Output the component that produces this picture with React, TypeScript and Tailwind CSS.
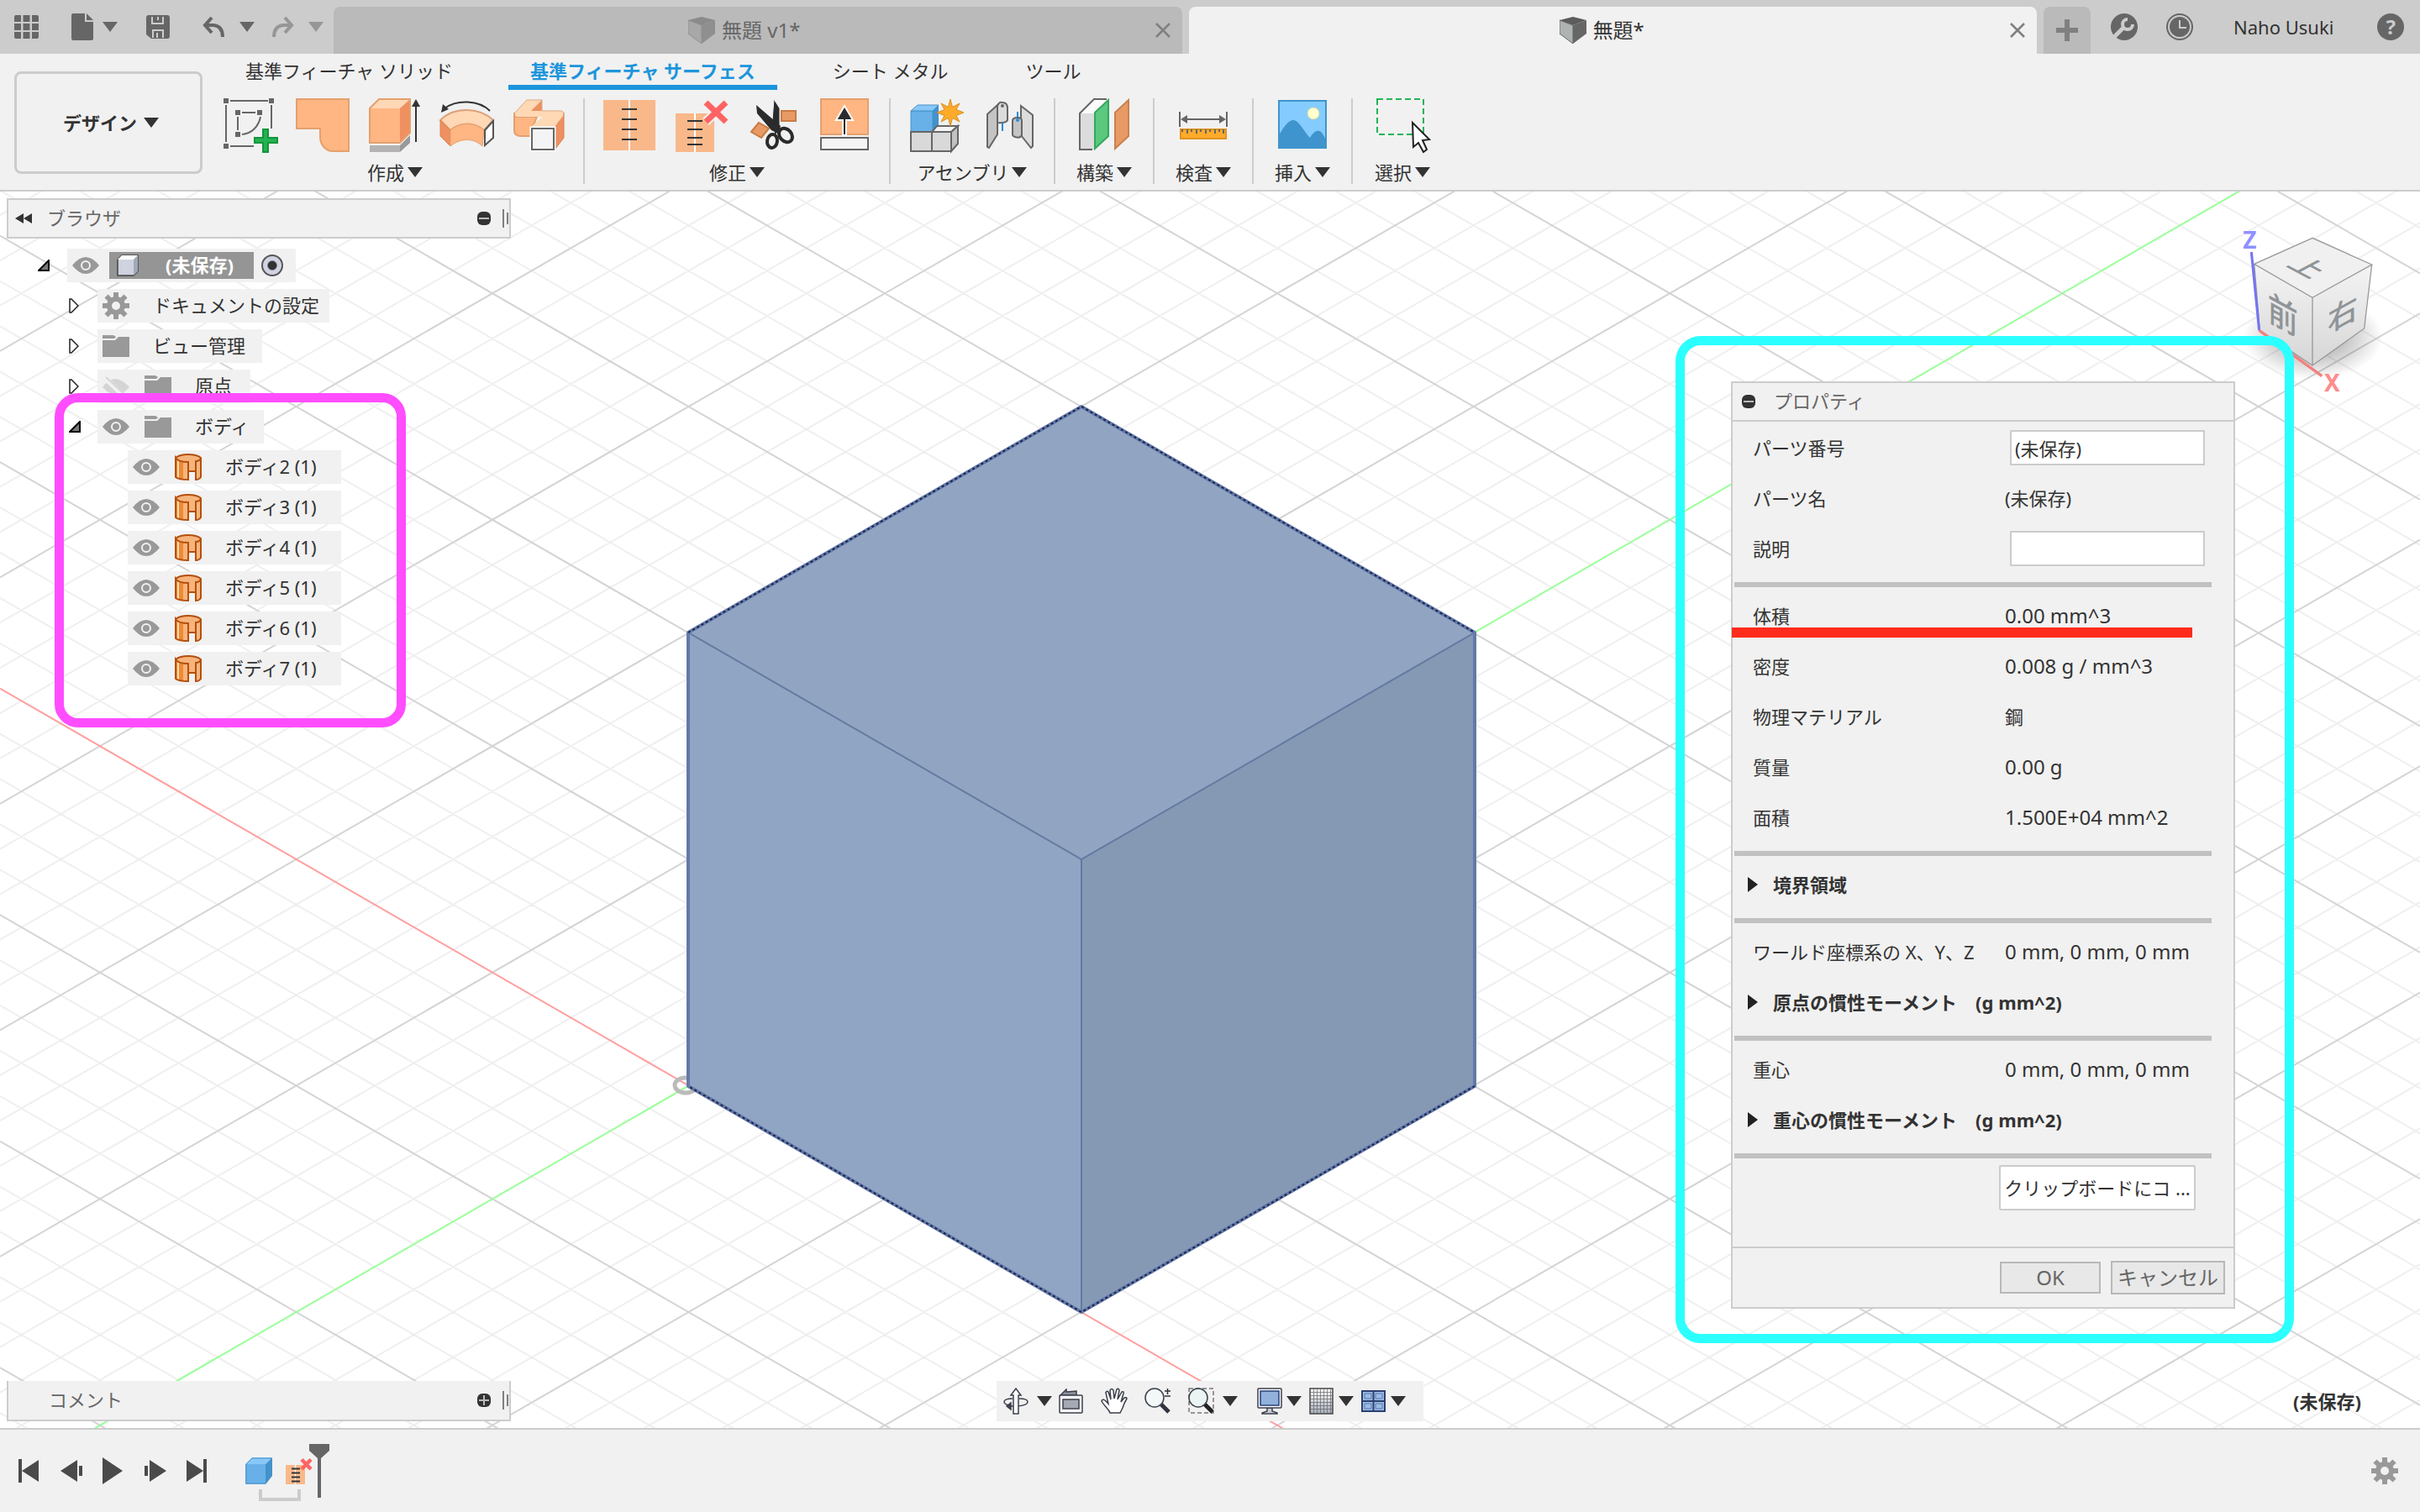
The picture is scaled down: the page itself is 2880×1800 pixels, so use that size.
import React, { useState } from 'react';

const ORIGIN = { x: 819.5, y: 1292.5 };
const SLOPE = 0.577;
const STEP = 53.9;

// Isometric floor grid, every fifth line is a major one
const gridLines = (major: boolean) => {
  let d = '';
  for (let k = -60; k <= 60; k++) {
    if (k === 0 || (k % 5 === 0) !== major) continue;
    const y = ORIGIN.y + k * STEP;
    const leftDown = y - ORIGIN.x * SLOPE;
    const leftUp = y + ORIGIN.x * SLOPE;
    d += `M0 ${leftDown}L2880 ${leftDown + 2880 * SLOPE}`;
    d += `M0 ${leftUp}L2880 ${leftUp - 2880 * SLOPE}`;
  }
  return d;
};

const Caret: React.FC<{ className?: string }> = ({ className = 'text-[#333]' }) => (
  <svg width="18" height="12" viewBox="0 0 18 12" className={`shrink-0 ${className}`}>
    <path d="M0 0H18L9 12Z" fill="currentColor" />
  </svg>
);

const Icon: React.FC<{ children: React.ReactNode }> = ({ children }) => (
  <svg width="64" height="64" viewBox="0 0 64 64" fill="none" className="overflow-visible">{children}</svg>
);

const SketchIcon = () => (
  <Icon>
    <g fill="#666">
      <path d="M0 0h6v6H0zM54 0h6v6h-6zM0 54h6v6H0zM14 14h6v6h-6zM40 14h6v6h-6zM14 40h6v6h-6z" />
    </g>
    <path d="M8 3H53M3 8V52M57 8V36M8 57H36M22 17H38M17 22V38M44 22C42 33 34 42 22 43" stroke="#666" strokeWidth="2" />
    <path d="M47 37h6v10h11v6H53v11h-6V53H37v-6h10z" fill="#24b252" stroke="#14963c" strokeWidth="2" />
  </Icon>
);

const PatchIcon = () => (
  <Icon>
    <path d="M1 1H63V63H44C36 63 29 56 29 46V36H1Z" fill="#ffb682" stroke="#e4a06e" strokeWidth="2" />
  </Icon>
);

const ExtrudeIcon = () => (
  <Icon>
    <path d="M2 56H38V64H2Z" fill="#b3b3b3" />
    <path d="M38 56L50 44V53L38 64Z" fill="#999" />
    <path d="M2 12L13 1H50L38 12Z" fill="#ffd8b5" />
    <path d="M38 12L50 1V41L38 53Z" fill="#ee9060" />
    <path d="M2 12H38V53H2Z" fill="#ffb682" />
    <path d="M2 12L13 1H50V41L38 53H2Z" stroke="#e4a06e" strokeWidth="2" />
    <path d="M57 8V52" stroke="#333" strokeWidth="2" />
    <path d="M57 1L62 10H52Z" fill="#333" />
  </Icon>
);

const RevolveIcon = () => (
  <Icon>
    <path d="M59 15C46 2 20 1 5 12" stroke="#333" strokeWidth="2" />
    <path d="M1 17L3 7L10 13Z" fill="#333" />
    <path d="M0 26C16 10 46 10 63 26L52 38C40 28 24 28 12 38Z" fill="#ffd8b5" stroke="#dba17a" strokeWidth="2" />
    <path d="M0 26L12 38V57L0 45Z" fill="#ee9060" stroke="#d98252" strokeWidth="1" />
    <path d="M12 38C24 28 40 28 52 38L50 57C40 47 24 47 12 57Z" fill="#ffb682" stroke="#e4a06e" strokeWidth="1" />
    <path d="M63 27L53 38V56L63 47Z" fill="#fff" stroke="#555" strokeWidth="2" />
  </Icon>
);

const RuledIcon = () => (
  <Icon>
    <path d="M2 17V38Q2 45 10 45H24V34L29 22H3Z" fill="#ffb682" stroke="#e4a06e" strokeWidth="2" />
    <path d="M35 1V15H21Z" fill="#ee9060" />
    <path d="M61 17V47L51 60V34Z" fill="#ee9060" stroke="#d98252" strokeWidth="1" />
    <path d="M3 17L17 2H35L22 15H57Q62 15 60 21L50 34H22L36 22H6Q2 22 3 17Z" fill="#ffd8b5" />
    <path d="M2 18L17 2H35V15H57Q62 15 61 21" stroke="#dba982" strokeWidth="1" />
    <path d="M23 36H49V61H23Z" fill="#f1f1f1" stroke="#fff" strokeWidth="5" />
    <path d="M23 36H49V61H23Z" fill="#f4f4f4" stroke="#666" strokeWidth="2" />
  </Icon>
);

const StitchIcon = () => (
  <Icon>
    <path d="M2 2H64V62H2Z" fill="#f8b88a" />
    <path d="M33 2V62" stroke="#fff" strokeWidth="2" />
    <path d="M24 13H42M24 25H42M24 37H42M24 49H42" stroke="#333" strokeWidth="2" />
  </Icon>
);

const UnstitchIcon = () => (
  <Icon>
    <path d="M2 18H48V64H2Z" fill="#f8b88a" />
    <path d="M25 18V64" stroke="#fff" strokeWidth="2" />
    <path d="M16 27H34M16 37H34M16 47H34M16 55H34" stroke="#333" strokeWidth="2" />
    <path d="M38 5L62 28M62 5L38 28" stroke="#f1f1f1" strokeWidth="11" />
    <path d="M38 5L62 28M62 5L38 28" stroke="#ff6464" strokeWidth="7" />
  </Icon>
);

const TrimIcon = () => (
  <Icon>
    <path d="M42 15H59V27H42Z" fill="#e89a64" stroke="#c97b44" strokeWidth="2" />
    <path d="M6 40L15 29L27 36L18 47Z" fill="#e89a64" stroke="#c97b44" strokeWidth="2" />
    <path d="M33 1L40 12V38L34 44L31 26Z" fill="#2b2b2b" stroke="#f1f1f1" strokeWidth="1" />
    <path d="M12 8L41 33L38 42L30 38L13 18Z" fill="#2b2b2b" />
    <ellipse cx="31" cy="51" rx="6" ry="8" stroke="#2b2b2b" strokeWidth="4" transform="rotate(8 31 51)" />
    <ellipse cx="47" cy="44" rx="7" ry="9" stroke="#2b2b2b" strokeWidth="4" transform="rotate(-42 47 44)" />
  </Icon>
);

const ExtendIcon = () => (
  <Icon>
    <path d="M3 1H59V43H3Z" fill="#ffb682" stroke="#e4a06e" strokeWidth="2" />
    <path d="M31 9L41 26H33V44H29V26H21Z" fill="#2b2b2b" stroke="#fff" strokeWidth="2" />
    <path d="M3 47H59V61H3Z" fill="#f4f4f4" stroke="#666" strokeWidth="2" />
  </Icon>
);

const ComponentIcon = () => (
  <Icon>
    <path d="M2 15H28V40H2Z" fill="#68b0e8" stroke="#4a92c8" strokeWidth="1" />
    <path d="M2 15L10 8H35L28 15Z" fill="#88c8f8" stroke="#4a92c8" strokeWidth="1" />
    <path d="M28 15L35 8V33L28 40Z" fill="#4292cc" />
    <path d="M2 40H27V63H2ZM27 40H50V63H27Z" fill="#d9d9d9" stroke="#666" strokeWidth="2" />
    <path d="M27 40L33 33H58L50 40Z" fill="#f4f4f4" stroke="#666" strokeWidth="2" />
    <path d="M50 40L58 33V54L50 63Z" fill="#c2c2c2" stroke="#666" strokeWidth="2" />
    <path
      d="M49 1L51.5 10.500L60 6L56 13.500L65 17L56 20.500L60 28L51.500 23.500L49 33L46.500 23.500L38 28L42 20.500L33 17L42 13.500L38 6L46.500 10.500Z"
      fill="#ffaa2a" stroke="#d9911e" strokeWidth="1"
    />
  </Icon>
);

const JointIcon = () => (
  <Icon>
    <path d="M7 19L19 8V43L9 59L7 58Z" fill="#c4c4c4" stroke="#666" strokeWidth="2" />
    <path d="M19 10Q20 4 25 5Q31 5 31 12V26Q29 30 19 29Z" fill="#dcdcdc" stroke="#666" strokeWidth="2" />
    <circle cx="25" cy="9" r="2" fill="#666" />
    <path d="M25 29V39M43 16V26" stroke="#1e8fe0" strokeWidth="2" />
    <path d="M47 9L61 20V57L59 59L47 44Z" fill="#dcdcdc" stroke="#666" strokeWidth="2" />
    <path d="M37 27Q37 23 43 23Q48 23 48 27V44Q46 48 40 46Q37 45 37 43Z" fill="#c4c4c4" stroke="#666" strokeWidth="2" />
    <circle cx="43" cy="26" r="2" fill="#1e8fe0" />
  </Icon>
);

const ConstructIcon = () => (
  <Icon>
    <path d="M3 18H20V61H3Z" fill="#dcdcdc" />
    <path d="M3 18L20 1H37L20 18Z" fill="#fbfbfb" />
    <path d="M18 61H3V18L20 1H35" stroke="#666" strokeWidth="2" />
    <path d="M21 17L37 2V45L21 60Z" fill="#5ac87e" stroke="#34a85c" strokeWidth="2" />
    <path d="M45 17L61 2V45L45 60Z" fill="#e89a64" stroke="#c9804e" strokeWidth="2" />
  </Icon>
);

const MeasureIcon = () => (
  <Icon>
    <path d="M4 16V34M60 16V34M10 25H54" stroke="#666" strokeWidth="2" />
    <path d="M5 25L13 20V30ZM59 25L51 20V30Z" fill="#666" />
    <path d="M5 37H59V48H5Z" fill="#ffaa2a" stroke="#e0931e" strokeWidth="2" />
    <path d="M7 37V40M13 37V42M18 37V40M24 37V42M29 37V40M35 37V42M40 37V40M46 37V42M51 37V40M56 37V42" stroke="#666" strokeWidth="2" />
  </Icon>
);

const InsertIcon = () => (
  <Icon>
    <path d="M4 3H60V59H4Z" fill="#84ccff" />
    <circle cx="45" cy="18" r="7" fill="#ffffcf" stroke="#d8dca0" strokeWidth="1" />
    <path d="M4 44C12 30 17 26 21 26C28 26 34 40 41 47C45 40 49 38 52 39C56 40 58 46 60 50V59H4Z" fill="#3f94cd" />
    <path d="M4 3H60V59H4Z" stroke="#3f94cd" strokeWidth="2" />
  </Icon>
);

const SelectIcon = () => (
  <Icon>
    <path d="M2 1H57V43H2Z" stroke="#24b455" strokeWidth="2" strokeDasharray="7 4" />
    <path d="M44 29L64 49L56 50L61 61L57 64L51 53L45 58Z" fill="#fff" stroke="#222" strokeWidth="2" />
  </Icon>
);

const toolGroups = [
  {
    label: '作成',
    className: 'pr-5',
    tools: [
      { name: 'スケッチを作成', icon: <SketchIcon /> },
      { name: 'パッチ', icon: <PatchIcon /> },
      { name: '押し出し', icon: <ExtrudeIcon /> },
      { name: '回転', icon: <RevolveIcon /> },
      { name: 'ルールド', icon: <RuledIcon /> },
    ],
  },
  {
    label: '修正',
    className: 'px-5',
    tools: [
      { name: 'ステッチ', icon: <StitchIcon /> },
      { name: 'ステッチ解除', icon: <UnstitchIcon /> },
      { name: 'トリム', icon: <TrimIcon /> },
      { name: '延長', icon: <ExtendIcon /> },
    ],
  },
  {
    label: 'アセンブリ',
    className: 'px-[22px]',
    tools: [
      { name: '新規コンポーネント', icon: <ComponentIcon /> },
      { name: 'ジョイント', icon: <JointIcon /> },
    ],
  },
  { label: '構築', className: 'w-[118px]', tools: [{ name: '平面', icon: <ConstructIcon /> }] },
  { label: '検査', className: 'w-[118px]', tools: [{ name: '計測', icon: <MeasureIcon /> }] },
  { label: '挿入', className: 'w-[118px]', tools: [{ name: 'キャンバス', icon: <InsertIcon /> }] },
  { label: '選択', className: 'w-[118px]', tools: [{ name: '選択ツール', icon: <SelectIcon /> }] },
];

const workspaceTabs = ['基準フィーチャ ソリッド', '基準フィーチャ サーフェス', 'シート メタル', 'ツール'];

const DocCube: React.FC<{ light?: boolean }> = ({ light }) => (
  <svg width="32" height="32" viewBox="0 0 32 32">
    <path d="M0 4L16 0L32 4L16 10Z" fill={light ? '#8a8a8a' : '#5c5c5c'} />
    <path d="M0 4L16 10V32L0 20Z" fill={light ? '#a8a8a8' : '#b0b3b3'} stroke={light ? '#8f8f8f' : '#666'} strokeWidth="1" />
    <path d="M32 4L16 10V32L32 20Z" fill={light ? '#8f8f8f' : '#666'} />
  </svg>
);

const CloseIcon = () => (
  <svg width="18" height="18" viewBox="0 0 18 18">
    <path d="M1 1L17 17M17 1L1 17" stroke="#808080" strokeWidth="2.500" />
  </svg>
);

const TitleBar = () => (
  <header className="flex h-16 shrink-0 items-end bg-[#ccc]">
    <div className="flex h-16 w-[397px] shrink-0 items-center pl-[17px] text-[#666]">
      <button aria-label="データ パネル" className="mr-[39px]">
        <svg width="29" height="28" viewBox="0 0 29 28" fill="currentColor">
          <path d="M0 2Q0 0 2 0H8V8H0zM10.500 0h8v8h-8zM21 0h6Q29 0 29 2V8h-8zM0 10h8v8H0zM10.500 10h8v8h-8zM21 10h8v8h-8zM0 20h8v8H2Q0 28 0 26zM10.500 20h8v8h-8zM21 20h8v6Q29 28 27 28h-6z" />
        </svg>
      </button>
      <button aria-label="ファイル" className="mr-[34px] flex items-center gap-[11px]">
        <svg width="26" height="32" viewBox="0 0 26 32" fill="currentColor">
          <path d="M2 0H16V10H26V30Q26 32 24 32H2Q0 32 0 30V2Q0 0 2 0ZM18 0L26 8H18Z" />
        </svg>
        <Caret className="text-[#666]" />
      </button>
      <button aria-label="保存" className="mr-[39px]">
        <svg width="28" height="28" viewBox="0 0 28 28">
          <path d="M3 0H25Q28 0 28 3V25Q28 28 25 28H6L0 23V3Q0 0 3 0Z" fill="#666" />
          <path d="M7 2V10H20V2M8 27V18H20V27M13 27V21" stroke="#ccc" strokeWidth="2" fill="none" />
          <path d="M14 2V6" stroke="#ccc" strokeWidth="2" />
        </svg>
      </button>
      <button aria-label="元に戻す" className="mr-[21px] flex items-center gap-[18px]">
        <svg width="26" height="24" viewBox="0 0 26 24" fill="none" stroke="currentColor" strokeWidth="4">
          <path d="M11 1L3 10L11 19M4 10H13Q24 11 24 24" />
        </svg>
        <Caret className="text-[#666]" />
      </button>
      <button aria-label="やり直し" className="flex items-center gap-[17px] text-[#969696]">
        <svg width="26" height="24" viewBox="0 0 26 24" fill="none" stroke="currentColor" strokeWidth="4">
          <path d="M15 1L23 10L15 19M22 10H13Q2 11 2 24" />
        </svg>
        <Caret className="text-[#969696]" />
      </button>
    </div>
    <nav className="flex flex-1 items-end gap-2">
      <div className="flex h-14 flex-1 items-center rounded-t-lg bg-[#bababa] pr-3.5 text-[#666]">
        <button className="flex flex-1 items-center justify-center gap-2 text-2xl">
          <DocCube light />無題 v1*
        </button>
        <button aria-label="無題 v1 を閉じる"><CloseIcon /></button>
      </div>
      <div className="flex h-14 flex-1 items-center rounded-t-lg bg-[#f1f1f1] pr-3.5">
        <button className="flex flex-1 items-center justify-center gap-2 pl-1.5 text-2xl">
          <DocCube />無題*
        </button>
        <button aria-label="無題 を閉じる"><CloseIcon /></button>
      </div>
      <button aria-label="新しいデザイン" className="flex h-14 w-14 items-center justify-center rounded-t-lg bg-[#bababa]">
        <svg width="26" height="26" viewBox="0 0 26 26"><path d="M13 0V26M0 13H26" stroke="#808080" strokeWidth="6" /></svg>
      </button>
    </nav>
    <div className="flex h-16 w-[392px] shrink-0 items-center pl-6">
      <button aria-label="拡張機能" className="mr-[34px]">
        <svg width="32" height="32" viewBox="0 0 32 32">
          <circle cx="16" cy="16" r="16" fill="#666" />
          <path d="M4 28L15 17" stroke="#ccc" strokeWidth="5" />
          <path d="M20 7A6 6 0 1 0 26 13" stroke="#ccc" strokeWidth="4" fill="none" />
          <path d="M18 14L24 8" stroke="#666" strokeWidth="3" />
        </svg>
      </button>
      <button aria-label="ジョブ ステータス" className="mr-12">
        <svg width="32" height="32" viewBox="0 0 32 32" fill="none">
          <circle cx="16" cy="16" r="15" stroke="#666" strokeWidth="2" />
          <circle cx="16" cy="16" r="12" fill="#666" />
          <path d="M16 8V17H24" stroke="#ccc" strokeWidth="2" />
        </svg>
      </button>
      <button className="mr-[52px] text-[22px] whitespace-nowrap">Naho Usuki</button>
      <button aria-label="ヘルプ" className="flex h-8 w-8 items-center justify-center rounded-full bg-[#666] text-2xl font-bold text-[#ccc]">?</button>
    </div>
  </header>
);

const Ribbon = () => {
  const [active, setActive] = useState(1);
  return (
    <div className="flex h-[164px] shrink-0 border-b-2 border-[#ccc] bg-[#f1f1f1]">
      <button className="mt-[21px] ml-[17px] flex h-[122px] w-[224px] items-center justify-center gap-2 rounded-lg border-3 border-[#ccc] pl-1.5 font-bold">
        デザイン<Caret />
      </button>
      <div className="ml-[25px]">
        <nav className="flex h-[43px] gap-10">
          {workspaceTabs.map((tab, i) => (
            <button
              key={tab}
              onClick={() => setActive(i)}
              className={
                i === active
                  ? 'border-b-6 border-[#1c95dc] px-[26px] pt-0.5 font-bold text-[#1c95dc]'
                  : 'border-b-6 border-transparent px-[26px] pt-0.5'
              }
            >
              {tab}
            </button>
          ))}
        </nav>
        <div className="mt-2.5 flex h-[102px] divide-x-2 divide-[#ccc]">
          {toolGroups.map((group) => (
            <div key={group.label} className={`flex flex-col items-center gap-2 ${group.className}`}>
              <div className="flex h-16 items-end gap-[22px]">
                {group.tools.map((tool) => (
                  <button key={tool.name} aria-label={tool.name}>{tool.icon}</button>
                ))}
              </div>
              <button className="flex items-center gap-1 leading-8">{group.label}<Caret /></button>
            </div>
          ))}
        </div>
      </div>
    </div>
  );
};

const EyeIcon = () => (
  <svg width="32" height="20" viewBox="0 0 32 20">
    <path d="M0 10Q8 0 16 0T32 10Q24 20 16 20T0 10Z" fill="#999" />
    <circle cx="16" cy="10" r="5" fill="none" stroke="#f1f1f1" strokeWidth="2" />
  </svg>
);

const EyeOffIcon = () => (
  <svg width="32" height="24" viewBox="0 0 32 24">
    <path d="M0 13Q8 2 16 3T32 13Q24 22 16 22T0 13Z" fill="#d4d4d4" />
    <path d="M2 1L27 25" stroke="#f1f1f1" strokeWidth="6" />
    <path d="M4 1L28 23" stroke="#d4d4d4" strokeWidth="2" />
  </svg>
);

const FolderIcon = () => (
  <svg width="32" height="26" viewBox="0 0 32 26" fill="#999">
    <path d="M0 0H13L16 2L14 4H0ZM0 6H15L19 2H32V26H0Z" />
  </svg>
);

const GearIcon = () => (
  <svg width="32" height="32" viewBox="0 0 32 32" fill="none" stroke="#999">
    <circle cx="16" cy="16" r="8" strokeWidth="6" />
    <path d="M16 0V6M16 26V32M0 16H6M26 16H32M4.500 4.500L9 9M23 23L27.500 27.500M4.500 27.500L9 23M23 9L27.500 4.500" strokeWidth="6" />
  </svg>
);

const BodyIcon = () => (
  <svg width="32" height="32" viewBox="0 0 32 32">
    <path d="M1 5V28Q7 32 16 31V22H24V31L31 28V5Q26 1 16 1T1 5Z" fill="#f6b47c" />
    <path d="M1 8V28Q5 31 10 31V10Z" fill="#ee8a34" />
    <path d="M4 9V29" stroke="#ffd9b4" strokeWidth="2" />
    <path d="M1 5Q6 1 16 1T31 5Q30 9 25 9V31Q29 31 31 28V5M1 5V28Q5 31 16 31V10Q4 10 1 5ZM16 21H25" fill="none" stroke="#b4500e" strokeWidth="2" />
  </svg>
);

const ExpandedIcon = () => (
  <svg width="14" height="14" viewBox="0 0 14 14"><path d="M1 13L13 1V13Z" fill="#777" stroke="#000" strokeWidth="2" /></svg>
);

const CollapsedIcon = () => (
  <svg width="12" height="18" viewBox="0 0 12 18"><path d="M1 1H3L11 9L3 17H1Z" fill="#fff" stroke="#222" strokeWidth="1.500" /></svg>
);

const treeRows = [
  { label: 'ドキュメントの設定', open: false, icons: [<GearIcon key="g" />], indent: 'pl-[74px]', width: 'w-[276px]' },
  { label: 'ビュー管理', open: false, icons: [<FolderIcon key="f" />], indent: 'pl-[74px]', width: 'w-[196px]' },
  { label: '原点', open: false, icons: [<EyeOffIcon key="e" />, <FolderIcon key="f" />], indent: 'pl-[74px]', width: 'w-[182px]' },
  { label: 'ボディ', open: true, icons: [<EyeIcon key="e" />, <FolderIcon key="f" />], indent: 'pl-[74px]', width: 'w-[198px]' },
  ...[2, 3, 4, 5, 6, 7].map((n) => ({
    label: `ボディ${n} (1)`,
    open: undefined,
    icons: [<EyeIcon key="e" />, <BodyIcon key="b" />],
    indent: 'pl-[110px]',
    width: 'w-[254px]',
  })),
];

const Knob: React.FC<{ plus?: boolean }> = ({ plus }) => (
  <svg width="16" height="16" viewBox="0 0 16 16">
    <rect width="16" height="16" rx="6" fill="#333" />
    <path d={plus ? 'M2 8H14M8 2V14' : 'M2 8H14'} stroke="#bbb" strokeWidth="2" />
  </svg>
);

const Grip = () => (
  <svg width="8" height="22" viewBox="0 0 8 22"><path d="M1 0V22M6 4V18" stroke="#808080" strokeWidth="2" /></svg>
);

const Browser = () => (
  <aside>
    <div className="flex h-12 items-center border-2 border-[#ccc] bg-[#f1f1f1] pl-2 text-[#666]">
      <button aria-label="折りたたむ" className="mr-[18px]">
        <svg width="20" height="12" viewBox="0 0 20 12"><path d="M0 6L10 0V12ZM10 6L20 0V12Z" fill="#333" /></svg>
      </button>
      <h2 className="flex-1 pb-0.5">ブラウザ</h2>
      <button aria-label="最小化" className="mr-3.5"><Knob /></button>
      <Grip />
    </div>
    <ul className="mt-2">
      <li className="flex h-12 items-center pl-[37px]">
        <button aria-label="展開" className="w-[35px]"><ExpandedIcon /></button>
        <div className="flex h-10 w-[272px] items-center bg-[#f1f1f1] pl-1.5">
          <EyeIcon />
          <div className="ml-3 flex h-8 w-[172px] items-center bg-[#959595] pl-[9px] font-bold text-white">
            <svg width="26" height="26" viewBox="0 0 26 26">
              <path d="M6 1H25V20L20 25H1V6Z" fill="#cfd3e0" stroke="#444" strokeWidth="1.500" />
              <path d="M1 6L6 1H25L20 6Z" fill="#fff" />
              <path d="M20 6L25 1V20L20 25Z" fill="#a2a8b8" />
            </svg>
            <span className="ml-8 pb-0.5">(未保存)</span>
          </div>
          <input
            type="radio"
            defaultChecked
            aria-label="コンポーネントをアクティブ化"
            className="ml-[9px] h-[26px] w-[26px] appearance-none rounded-full border-2 border-[#555] bg-radial from-[#333] from-30% to-[#d0d4e2] to-40%"
          />
        </div>
      </li>
      {treeRows.map((row) => (
        <li key={row.label} className={`flex h-12 items-center ${row.indent}`}>
          {row.open !== undefined && (
            <button aria-label={`${row.label} を切り替え`} className="w-[34px]">
              {row.open ? <ExpandedIcon /> : <CollapsedIcon />}
            </button>
          )}
          <div className={`flex h-10 items-center gap-[18px] bg-[#f1f1f1] pl-1.5 whitespace-nowrap ${row.open === undefined ? 'ml-[34px]' : ''} ${row.width}`}>
            {row.icons}
            <span className="ml-2.5 pb-0.5">{row.label}</span>
          </div>
        </li>
      ))}
    </ul>
  </aside>
);

const Model = () => (
  <svg className="absolute inset-0 h-full w-full" viewBox="0 228 2880 1472" preserveAspectRatio="xMidYMid slice" fill="none">
    <path d={gridLines(false)} stroke="#efefef" strokeWidth="2" />
    <path d={gridLines(true)} stroke="#d4d4d4" strokeWidth="2" />
    <path d="M0 819.500L2880 2481.500" stroke="#ff9e9e" strokeWidth="2" />
    <path d="M0 1765.500L2880 103.500" stroke="#98ff98" strokeWidth="2" />
    <ellipse cx="816" cy="1292" rx="13" ry="9" stroke="#bbb" strokeWidth="5" />
    <path d="M819 753L1287 484L1755 753L1287 1023Z" fill="#91a5c3" />
    <path d="M819 753L1287 1023V1562L819 1293Z" fill="#90a5c3" />
    <path d="M1755 753L1287 1023V1562L1755 1293Z" fill="#8599b5" />
    <path d="M819 753L1287 1023L1755 753M1287 1023V1562" stroke="#647aa0" strokeWidth="2" />
    <path d="M819 753L1287 484L1755 753V1293L1287 1562L819 1293Z" stroke="#6379a8" strokeWidth="4" strokeLinejoin="round" />
    <path d="M819 753L1287 484L1755 753M1755 1293L1287 1562L819 1293" stroke="#1c2450" strokeWidth="2" strokeDasharray="3 3" />
  </svg>
);

const ViewCube = () => (
  <svg className="absolute top-[37px] right-[34px]" width="190" height="220" viewBox="0 0 570 660" fill="none">
    <defs>
      <radialGradient id="shade">
        <stop offset="40%" stopColor="#000" stopOpacity="0.250" />
        <stop offset="100%" stopColor="#000" stopOpacity="0" />
      </radialGradient>
      <linearGradient id="side" x1="0" y1="0" x2="0" y2="1">
        <stop offset="0%" stopColor="#f4f4f4" />
        <stop offset="100%" stopColor="#d6d6d6" />
      </linearGradient>
    </defs>
    <ellipse cx="290" cy="410" rx="250" ry="150" fill="url(#shade)" />
    <path d="M288 55L80 148L288 268L500 150Z" fill="#f0f0f0" />
    <path d="M80 148L288 268V510L100 385Z" fill="url(#side)" />
    <path d="M500 150L288 268V510L473 378Z" fill="url(#side)" />
    <path d="M288 55L80 148L288 268L500 150ZM288 268V510L473 378L500 150M80 148L100 385L288 510" stroke="#999" strokeWidth="4" />
    <path d="M70 105L98 385" stroke="#7474f4" strokeWidth="9" />
    <path d="M98 385L322 548" stroke="#f28080" strokeWidth="10" />
    <g stroke="none" fill="#909498" fontSize="108" fontWeight="500">
      <text transform="matrix(0.850 0.450 -0.850 0.450 272 160)" x="-54" y="40">上</text>
      <text transform="matrix(1 0.550 0 1.200 182 328)" x="-54" y="40">前</text>
      <text transform="matrix(1 -0.550 0 1 396 326)" x="-54" y="40">右</text>
    </g>
    <g stroke="none" fontWeight="bold" fontSize="84">
      <text x="40" y="92" fill="#9090ff">Z</text>
      <text x="330" y="602" fill="#ff8c8c">X</text>
    </g>
  </svg>
);

const Row: React.FC<{ label: string; children?: React.ReactNode; htmlFor?: string }> = ({ label, children, htmlFor }) => (
  <div className="flex h-15 items-center pl-6">
    <label htmlFor={htmlFor} className="w-[300px] shrink-0">{label}</label>
    {children}
  </div>
);

const Value: React.FC<{ children: React.ReactNode }> = ({ children }) => (
  <output className="text-2xl">{children}</output>
);

const Section: React.FC<{ label: string }> = ({ label }) => (
  <button className="flex h-15 items-center gap-[18px] pl-[18px] font-bold whitespace-pre">
    <svg width="12" height="18" viewBox="0 0 12 18"><path d="M0 0L12 9L0 18Z" fill="#222" /></svg>
    {label}
  </button>
);

const Divider = () => <hr className="mt-2.5 mr-[26px] mb-1 ml-0.5 h-1.5 border-0 bg-[#c1c1c1]" />;

const Properties = () => (
  <section className="absolute top-[226px] right-[220px] w-[600px] bg-[#f1f1f1]">
    <div className="flex h-12 items-center gap-[22px] border-2 border-[#ccc] pl-[11px] text-[#666]">
      <button aria-label="最小化"><Knob /></button>
      <h2 className="pb-0.5">プロパティ</h2>
    </div>
    <div className="border-x-2 border-b-2 border-[#ccc] pt-px pb-[43px]">
      <Row label="パーツ番号" htmlFor="part-number">
        <input id="part-number" defaultValue="(未保存)" className="ml-1.5 h-[42px] w-[232px] border-2 border-[#ccc] bg-white px-1" />
      </Row>
      <Row label="パーツ名"><output>(未保存)</output></Row>
      <Row label="説明" htmlFor="description">
        <input id="description" className="ml-1.5 h-[42px] w-[232px] border-2 border-[#ccc] bg-white px-1" />
      </Row>
      <Divider />
      <div className="relative">
        <Row label="体積"><Value>0.00 mm^3</Value></Row>
        <div className="absolute bottom-1 -left-px h-3 w-[548px] bg-[#ff2b1c]" />
      </div>
      <Row label="密度"><Value>0.008 g / mm^3</Value></Row>
      <Row label="物理マテリアル"><output>鋼</output></Row>
      <Row label="質量"><Value>0.00 g</Value></Row>
      <Row label="面積"><Value>1.500E+04 mm^2</Value></Row>
      <Divider />
      <Section label="境界領域" />
      <Divider />
      <Row label="ワールド座標系の X、Y、Z"><Value>0 mm, 0 mm, 0 mm</Value></Row>
      <Section label="原点の慣性モーメント　(g mm^2)" />
      <Divider />
      <Row label="重心"><Value>0 mm, 0 mm, 0 mm</Value></Row>
      <Section label="重心の慣性モーメント　(g mm^2)" />
      <Divider />
      <button className="mt-2 ml-[317px] flex h-[54px] w-[234px] items-center justify-center rounded-xs border-2 border-[#ccc] bg-white whitespace-nowrap">
        クリップボードにコ ...
      </button>
    </div>
    <div className="flex h-[72px] items-center justify-end gap-3 border-x-2 border-b-2 border-[#ccc] pr-2.5 text-2xl text-[#666]">
      <button className="h-[38px] w-[120px] border-2 border-[#b8b8b8] bg-[#e8e8e8]">OK</button>
      <button className="h-10 w-[136px] border-2 border-[#b8b8b8] bg-[#e8e8e8] whitespace-nowrap">キャンセル</button>
    </div>
  </section>
);

const NavBar = () => (
  <div className="absolute bottom-2 left-1/2 flex h-12 w-[508px] -translate-x-1/2 items-center bg-[#f1f1f1] pl-2">
    <button aria-label="オービット" className="flex items-center gap-2.5">
      <svg width="30" height="32" viewBox="0 0 30 32" fill="none" stroke="#3c404c" strokeWidth="1.500">
        <path d="M10 22Q1 20 1 17Q1 13 11 13M19 13Q29 13 29 17Q29 21 16 22H6" />
        <path d="M12 31V9H9L15 1L21 9H18V31Z" fill="#fff" />
        <path d="M4 22L9 18V26Z" fill="#3c404c" />
      </svg>
      <Caret />
    </button>
    <button aria-label="ビュー正面" className="ml-2">
      <svg width="29" height="30" viewBox="0 0 29 30" fill="none" stroke="#3c404c" strokeWidth="1.500">
        <path d="M2 8L9 1V4L21 3V8Z" fill="#8c919c" />
        <rect x="1" y="8" width="27" height="21" rx="1" fill="#f8f8fc" />
        <rect x="5" y="13" width="19" height="11" fill="#a4a9b4" />
      </svg>
    </button>
    <button aria-label="画面移動" className="ml-[21px]">
      <svg width="32" height="32" viewBox="0 0 32 32">
        <path d="M11 30Q10 27 7 24Q2 18 1 16Q2 13 5 15L9 19L6 6Q7 3 9 5L12 14L11 3Q13 0 15 3L16 13L19 2Q21 0 22 3L20 14L25 5Q28 4 27 7L24 17L28 12Q31 11 31 13Q28 18 26 24L23 30Z" fill="#fff" stroke="#3c404c" strokeWidth="1.500" />
      </svg>
    </button>
    <button aria-label="ズーム" className="ml-5">
      <svg width="32" height="32" viewBox="0 0 32 32" fill="none">
        <circle cx="12" cy="12" r="11" fill="#f2f8f8" stroke="#3c404c" strokeWidth="1.500" />
        <path d="M20 20L29 29" stroke="#30343e" strokeWidth="5" />
        <path d="M24 4H31M27.500 1V8M24 10H31" stroke="#333" strokeWidth="1.500" />
      </svg>
    </button>
    <button aria-label="フィット" className="ml-5 flex items-center gap-[9px]">
      <svg width="32" height="32" viewBox="0 0 32 32" fill="none">
        <rect x="1" y="1" width="29" height="29" stroke="#777" strokeWidth="1.500" strokeDasharray="5 3" />
        <circle cx="12" cy="12" r="11" fill="#eaf4f3" stroke="#3c404c" strokeWidth="1.500" />
        <path d="M20 20L29 29" stroke="#222" strokeWidth="5" />
      </svg>
      <Caret />
    </button>
    <button aria-label="表示設定" className="ml-[23px] flex items-center gap-[5px]">
      <svg width="30" height="32" viewBox="0 0 30 32" stroke="#3c404c" strokeWidth="1.500">
        <path d="M12 24H18V28L24 30V31H6V30L12 28Z" fill="#c8ccd6" />
        <rect x="1" y="1" width="28" height="23" rx="1" fill="#fff" />
        <rect x="4" y="4" width="22" height="17" fill="#92b2dc" stroke="#27407a" />
      </svg>
      <Caret />
    </button>
    <button aria-label="グリッドとスナップ" className="ml-[9px] flex items-center gap-1.5">
      <svg width="29" height="32" viewBox="0 0 29 32">
        <defs>
          <linearGradient id="mesh" x1="0" y1="0" x2="0" y2="1">
            <stop offset="0%" stopColor="#fff" />
            <stop offset="100%" stopColor="#a6abba" />
          </linearGradient>
        </defs>
        <rect x="1" y="1" width="27" height="30" fill="url(#mesh)" stroke="#444" strokeWidth="1.500" />
        <path
          d="M5.500 1V31M9.500 1V31M13.500 1V31M17.500 1V31M21.500 1V31M25.500 1V31M1 5.500H28M1 9.500H28M1 13.500H28M1 17.500H28M1 21.500H28M1 25.500H28"
          stroke="#666" strokeWidth="1" strokeOpacity="0.700"
        />
      </svg>
      <Caret />
    </button>
    <button aria-label="ビューポート" className="ml-[9px] flex items-center gap-1.5">
      <svg width="29" height="26" viewBox="0 0 29 26" fill="#9ebbe2" stroke="#2a4070" strokeWidth="2">
        <path d="M1 1H28V25H1ZM14.500 1V25M1 13H28" />
        <path d="M4 4H12V10H4ZM17 4H25V10H17ZM4 16H12V22H4ZM17 16H25V22H17Z" stroke="#5478b4" strokeWidth="1" />
      </svg>
      <Caret />
    </button>
  </div>
);

const Timeline = () => (
  <footer className="flex h-[100px] shrink-0 items-center border-t-2 border-[#ccc] bg-[#f1f1f1] pl-[22px] text-[#4a4a4a]">
    <div className="flex w-[270px] items-center gap-6">
      <button aria-label="先頭へ" className="w-[26px]">
        <svg width="24" height="28" viewBox="0 0 24 28" fill="currentColor"><path d="M0 0H4V28H0ZM4 14L24 1V27Z" /></svg>
      </button>
      <button aria-label="前へ" className="w-[26px]">
        <svg width="26" height="28" viewBox="0 0 26 28" fill="currentColor"><path d="M0 14L20 1V27ZM22 8H26V20H22Z" /></svg>
      </button>
      <button aria-label="再生" className="w-[26px]">
        <svg width="24" height="32" viewBox="0 0 24 32" fill="currentColor"><path d="M0 0L24 16L0 32Z" /></svg>
      </button>
      <button aria-label="次へ" className="w-[26px]">
        <svg width="26" height="28" viewBox="0 0 26 28" fill="currentColor"><path d="M0 8H4V20H0ZM6 1L26 14L6 27Z" /></svg>
      </button>
      <button aria-label="末尾へ" className="w-[26px]">
        <svg width="24" height="28" viewBox="0 0 24 28" fill="currentColor"><path d="M0 1L20 14L0 27ZM20 0H24V28H20Z" /></svg>
      </button>
    </div>
    <div className="flex flex-1 items-center">
      <div className="relative flex gap-4">
        <button aria-label="ボックス">
          <svg width="32" height="32" viewBox="0 0 32 32">
            <path d="M0 8L8 0H32L24 8Z" fill="#88c8f8" />
            <path d="M24 8L32 0V22L24 32Z" fill="#4292cc" />
            <path d="M0 8H24V32H0Z" fill="#68b0e8" />
            <path d="M1 8L8 1H31V22L24 31H1Z" fill="none" stroke="#4a92c8" strokeWidth="1" />
          </svg>
        </button>
        <button aria-label="ステッチ解除">
          <svg width="32" height="32" viewBox="0 0 64 64" className="overflow-visible">
            <path d="M0 18H46V64H0Z" fill="#f8b88a" />
            <path d="M23 18V64" stroke="#fff" strokeWidth="3" />
            <path d="M14 27H34M14 37H34M14 47H34M14 57H34" stroke="#333" strokeWidth="4" />
            <path d="M38 5L60 28M60 5L38 28" stroke="#ff6464" strokeWidth="9" />
          </svg>
        </button>
        <div className="absolute top-[38px] left-4 h-3.5 w-[50px] border-x-4 border-b-4 border-[#ccc]" />
      </div>
      <svg width="24" height="64" viewBox="0 0 24 64" className="-ml-1" fill="#666">
        <path d="M0 0H24V8L14 17V64H10V17L0 8Z" />
      </svg>
    </div>
    <button aria-label="設定" className="mr-[26px]"><GearIcon /></button>
  </footer>
);

const App: React.FC = () => {
  return (
    <div className="flex h-screen flex-col overflow-hidden bg-white font-['Noto_Sans','Noto_Sans_CJK_JP',sans-serif] text-[22px] leading-8 text-[#333]">
      <TitleBar />
      <Ribbon />
      <main className="relative min-h-0 flex-1 overflow-hidden">
        <Model />
        <div className="relative ml-2 flex h-full w-[600px] flex-col justify-between py-2">
          <Browser />
          <div className="flex h-12 items-center border-x-2 border-b-2 border-[#ccc] bg-[#f1f1f1] pl-12 text-[#666]">
            <h2 className="flex-1 pb-0.5">コメント</h2>
            <button aria-label="展開" className="mr-3.5"><Knob plus /></button>
            <Grip />
          </div>
        </div>
        <ViewCube />
        <Properties />
        <NavBar />
        <div className="absolute right-[70px] bottom-4 font-bold">(未保存)</div>
        <div className="absolute top-[240px] left-[65px] h-[398px] w-[418px] rounded-[28px] border-11 border-[#ff4dff]" />
        <div className="absolute top-[172px] right-[150px] h-[1199px] w-[736px] rounded-[30px] border-11 border-[#2cffff]" />
      </main>
      <Timeline />
    </div>
  );
};

export default App;
